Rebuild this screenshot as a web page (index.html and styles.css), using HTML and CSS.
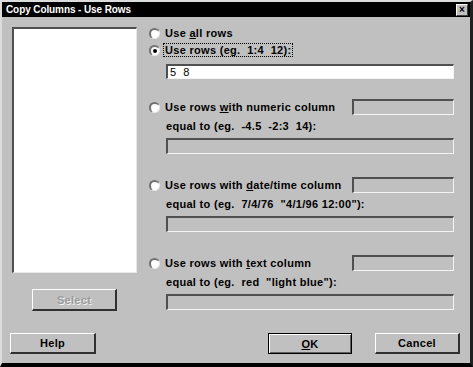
FILE: index.html
```html
<!DOCTYPE html>
<html lang="en">
<head>
	<meta charset="UTF-8">
	<title>Copy Columns - Use Rows</title>
	<link rel="stylesheet" href="styles.css">
</head>
<body>
	<div class="window">
		<div class="titlebar">
			<span class="title">Copy Columns - Use Rows</span>
			<span class="close">&#215;</span>
		</div>
		<div class="client">
			<div class="main">
				<div class="left">
					<div class="listbox"></div>
					<button class="btn select" disabled>Select</button>
				</div>
				<div class="right">
					<div class="opt first"><span class="radio"></span><span>Use <u>a</u>ll rows</span></div>
					<div class="opt second"><span class="radio checked"></span><span class="focus">Use rows (eg.&nbsp; 1:4&nbsp; 12):</span></div>
					<div class="field white">5&nbsp; 8</div>

					<div class="group">
						<div class="opt"><span class="radio"></span><span class="label">Use rows <u>w</u>ith numeric column</span><span class="field small"></span></div>
						<div class="equal">equal to (eg.&nbsp; -4.5&nbsp; -2:3&nbsp; 14):</div>
						<div class="field"></div>
					</div>
					<div class="group">
						<div class="opt"><span class="radio"></span><span class="label">Use rows with <u>d</u>ate/time column</span><span class="field small"></span></div>
						<div class="equal">equal to (eg.&nbsp; 7/4/76&nbsp; "4/1/96 12:00"):</div>
						<div class="field"></div>
					</div>
					<div class="group">
						<div class="opt"><span class="radio"></span><span class="label">Use rows with <u>t</u>ext column</span><span class="field small"></span></div>
						<div class="equal">equal to (eg.&nbsp; red&nbsp; "light blue"):</div>
						<div class="field"></div>
					</div>
				</div>
			</div>
			<div class="buttons">
				<button class="btn">Help</button>
				<span class="spacer"></span>
				<button class="btn default"><u>O</u>K</button>
				<button class="btn">Cancel</button>
			</div>
		</div>
	</div>
</body>
</html>
```

FILE: styles.css
```css
*{
	margin: 0;
	padding: 0;
	box-sizing: border-box;
}
body{
	background: #c0c0c0;
	font: bold 11px "Liberation Sans", Arial, sans-serif;
	letter-spacing: 0.3px;
	color: #000;
}
.window{
	width: 473px;
	height: 367px;
	background: #c0c0c0;
	border-top: 2px solid #dcdcdc;
	border-left: 2px solid #dcdcdc;
	border-right: 3px solid #202020;
	border-bottom: 4px solid #000;
	display: flex;
	flex-direction: column;
}
.titlebar{
	height: 15px;
	background: #000;
	color: #fff;
	display: flex;
	align-items: center;
	padding-left: 4px;
	padding-right: 2px;
}
.title{
	flex: 1;
	font-size: 10px;
	letter-spacing: -0.1px;
}
.close{
	width: 12px;
	height: 12px;
	background: #c0c0c0;
	border-top: 1px solid #fff;
	border-left: 1px solid #fff;
	border-right: 1px solid #404040;
	border-bottom: 1px solid #404040;
	color: #000;
	font-size: 10px;
	line-height: 9px;
	text-align: center;
	letter-spacing: 0;
}
.client{
	flex: 1;
	display: flex;
	flex-direction: column;
}
.main{
	height: 316px;
	display: flex;
}
.left{
	width: 146px;
	padding-left: 10px;
	padding-top: 10px;
}
.listbox{
	width: 125px;
	height: 246px;
	background: #fff;
	border-top: 2px solid #505050;
	border-left: 2px solid #505050;
	border-right: 1px solid #e8e8e8;
	border-bottom: 1px solid #e8e8e8;
}
.btn{
	font: bold 11px "Liberation Sans", Arial, sans-serif;
	letter-spacing: 0.3px;
	background: #c0c0c0;
	height: 21px;
	border-top: 1px solid #fff;
	border-left: 1px solid #fff;
	border-right: 2px solid #303030;
	border-bottom: 2px solid #303030;
	color: #000;
}
.select{
	width: 85px;
	height: 22px;
	margin-top: 16px;
	margin-left: 20px;
	color: #9a9a9a;
	text-shadow: 1px 1px 0 #f0f0f0;
}
.right{
	flex: 1;
	padding-top: 8px;
	padding-right: 16px;
}
.opt{
	height: 16px;
	display: flex;
	align-items: center;
}
.second{
	margin-top: 1px;
}
.radio{
	width: 11px;
	height: 11px;
	border-radius: 50%;
	background: #fff;
	border-top: 2px solid #707070;
	border-left: 2px solid #707070;
	border-right: 1px solid #e8e8e8;
	border-bottom: 1px solid #e8e8e8;
	margin-left: 1px;
	margin-right: 5px;
	display: flex;
	align-items: center;
	justify-content: center;
}
.checked::after{
	content: "";
	width: 4px;
	height: 4px;
	border-radius: 50%;
	background: #000;
}
.focus{
	outline: 1px dotted #000;
	padding: 0 1px;
	margin-left: -1px;
}
.field{
	height: 16px;
	margin-left: 18px;
	background: #c0c0c0;
	border-top: 2px solid #505050;
	border-left: 2px solid #505050;
	border-right: 1px solid #f4f4f4;
	border-bottom: 1px solid #f4f4f4;
}
.white{
	background: #fff;
	height: 15px;
	margin-top: 6px;
	padding-left: 2px;
	font-weight: normal;
	line-height: 12px;
}
.group{
	margin-top: 20px;
}
.group + .group{
	margin-top: 23px;
}
.label{
	flex: 1;
}
.opt .small{
	width: 102px;
	margin-left: 0;
}
.equal{
	height: 16px;
	line-height: 16px;
	margin-top: 3px;
	margin-left: 18px;
}
.equal + .field{
	margin-top: 4px;
}
.buttons{
	display: flex;
	padding-left: 8px;
	padding-right: 10px;
}
.buttons .btn{
	width: 86px;
}
.spacer{
	flex: 1;
}
.default{
	border: 1px solid #000;
	box-shadow: inset 1px 1px 0 #fff, inset -1px -1px 0 #606060;
	margin-right: 23px;
	width: 84px !important;
}
.buttons .btn:last-child{
	width: 85px;
}
```
